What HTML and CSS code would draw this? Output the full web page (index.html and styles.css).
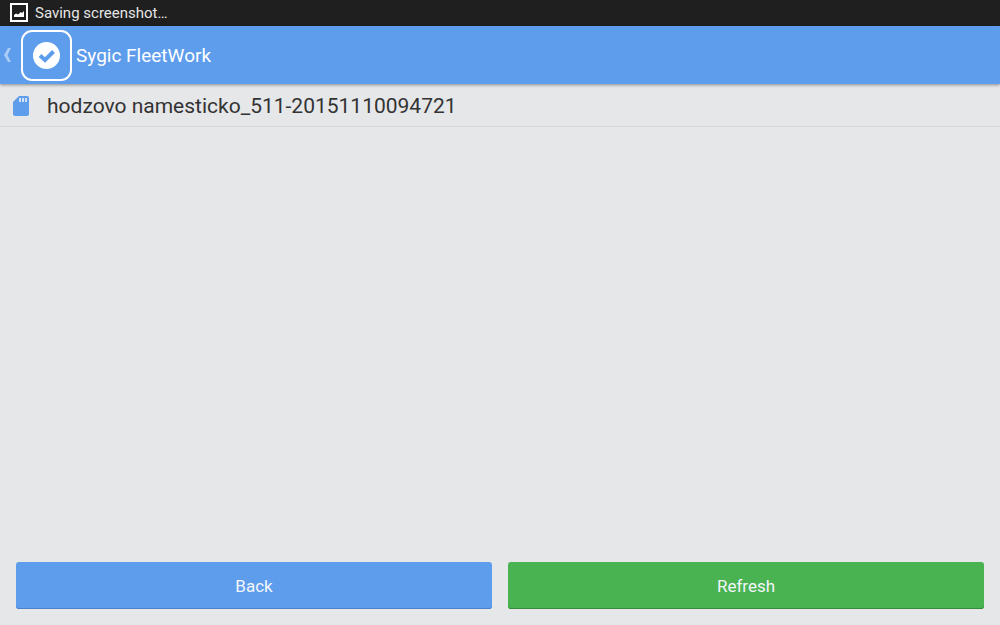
FILE: index.html
```html
<!DOCTYPE html>
<html lang="en">
<head>
    <meta charset="UTF-8">
    <meta name="viewport" content="width=device-width, initial-scale=1.0">
    <title>Sygic FleetWork</title>
    <link rel="stylesheet" href="styles.css">
</head>
<body>

    <!-- Status bar -->
    <div class="status-bar">
        <svg class="status-icon" viewBox="0 0 18 20" aria-hidden="true">
            <rect x="1" y="1" width="16" height="17" fill="none" stroke="#fff" stroke-width="2"/>
            <path d="M4 14V12L6 10.5L8 11.5L11 9L12 10L14 8V14Z" fill="#fff"/>
        </svg>
        <span>Saving screenshot…</span>
    </div>

    <!-- Header -->
    <header>
        <a href="#" class="home-link">
            <svg class="chevron" viewBox="0 0 8 16" aria-hidden="true">
                <path d="M5 1H8L4.500 8L8 15H5L1 8Z" fill="#a9cbf5"/>
            </svg>
            <svg class="app-icon" viewBox="0 0 52 52" aria-hidden="true">
                <rect x="2" y="2" width="49" height="49" rx="10" fill="none" stroke="#fff" stroke-width="2"/>
                <circle cx="26.500" cy="26.500" r="13.500" fill="#fff"/>
                <path d="M20 26.500L25 31L33.500 22.500" fill="none" stroke="#5e9cec" stroke-width="4"/>
            </svg>
            <h1>Sygic FleetWork</h1>
        </a>
    </header>

    <!-- File list -->
    <main>
        <ul class="file-list">
            <li class="file-item">
                <svg class="card-icon" viewBox="0 0 16 20" aria-hidden="true">
                    <path d="M6 0H14Q16 0 16 2V18Q16 20 14 20H2Q0 20 0 18V6Z" fill="#5e9cec"/>
                    <path d="M6 2H8V6H6ZM9 2H11V6H9ZM12 2H14V6H12Z" fill="#d3e1f3"/>
                </svg>
                <span>hodzovo namesticko_511-20151110094721</span>
            </li>
        </ul>
    </main>

    <!-- Bottom buttons -->
    <footer>
        <button type="button" class="btn btn-back">Back</button>
        <button type="button" class="btn btn-refresh">Refresh</button>
    </footer>

</body>
</html>
```
FILE: styles.css
```css
/* General Styles */
* {
    box-sizing: border-box;
}

body {
    font-family: Roboto, sans-serif;
    margin: 0;
    min-height: 100vh;
    display: flex;
    flex-direction: column;
    background-color: #e6e7e9;
    color: #333;
}

/* Status bar */
.status-bar {
    display: flex;
    align-items: center;
    gap: 7px;
    height: 26px;
    padding: 0 10px;
    background-color: #1f1f1f;
    color: #e6e6e6;
    font-size: 15px;
}

.status-icon {
    width: 18px;
    height: 20px;
}

/* Header */
header {
    background-color: #5e9cec;
    box-shadow: 0 1px 3px rgba(0, 0, 0, 0.4);
}

.home-link {
    display: flex;
    align-items: center;
    height: 58px;
    padding-left: 3px;
    color: #fff;
    text-decoration: none;
}

.chevron {
    width: 8px;
    height: 16px;
}

.app-icon {
    width: 52px;
    height: 52px;
    margin: 0 4px 0 9px;
}

h1 {
    margin: 0;
    font-size: 19px;
    font-weight: 400;
}

/* File list */
main {
    flex: 1;
}

.file-list {
    margin: 0;
    padding: 0;
    list-style: none;
}

.file-item {
    display: flex;
    align-items: center;
    gap: 18px;
    height: 43px;
    padding: 2px 13px 0;
    border-bottom: 1px solid #d8d9db;
    font-size: 21px;
}

.card-icon {
    width: 16px;
    height: 20px;
}

/* Bottom buttons */
footer {
    display: flex;
    gap: 16px;
    padding: 0 16px 16px;
}

.btn {
    flex: 1;
    height: 47px;
    padding: 1px 0 0;
    border: none;
    border-radius: 3px;
    color: #f2f6fb;
    font-family: inherit;
    font-size: 17px;
    cursor: pointer;
}

.btn-back {
    background-color: #5e9cec;
    box-shadow: inset 0 -1px #4a80cc;
}

.btn-refresh {
    background-color: #49b251;
    box-shadow: inset 0 -1px #358a3c;
}
```
